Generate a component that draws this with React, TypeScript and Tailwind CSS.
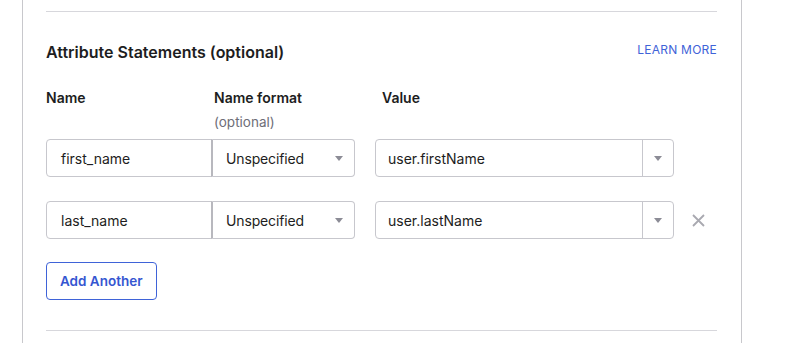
import React from 'react';

const Caret = () => (
  <svg width="8" height="5" viewBox="0 0 8 5" className="shrink-0">
    <path d="M0 0h8L4 5z" fill="#8c8c96" />
  </svg>
);

type Row = { name: string; value: string; removable?: boolean };

const rows: Row[] = [
  { name: 'first_name', value: 'user.firstName' },
  { name: 'last_name', value: 'user.lastName', removable: true },
];

const AttributeRow = ({ row }: { row: Row }) => (
  <div className="flex items-center h-[38px]">
    <div className="flex w-[309px] h-full">
      <div className="w-[166px] h-full flex items-center pl-[14px] border border-[#c7c7cd] rounded-l-[4px] text-[14px] text-[#1d1d21]">
        {row.name}
      </div>
      <div className="flex-1 h-full flex items-center justify-between pl-[13px] pr-[11px] border border-l-[#b8b8be] border-l-2 border-[#c7c7cd] -ml-px rounded-r-[4px] text-[14px] tracking-[-0.01em] text-[#1d1d21]">
        Unspecified
        <Caret />
      </div>
    </div>
    <div className="ml-[20px] w-[299px] h-full flex border border-[#c7c7cd] rounded-[4px]">
      <div className="flex-1 flex items-center pl-[12px] text-[14px] text-[#1d1d21]">{row.value}</div>
      <div className="w-[31px] flex items-center justify-center border-l border-[#c7c7cd]">
        <Caret />
      </div>
    </div>
    {row.removable && (
      <button className="ml-[17px] w-[14px] h-[14px] flex items-center justify-center">
        <svg width="13" height="13" viewBox="0 0 13 13">
          <path d="M1 1l11 11M12 1L1 12" stroke="#a9a9b0" strokeWidth="1.8" />
        </svg>
      </button>
    )}
  </div>
);

export default function App() {
  return (
    <div className="w-[785px] h-[343px] bg-white overflow-hidden font-['Inter',sans-serif]">
      <div className="ml-[22px] w-[720px] h-full border-x border-[#c8c8cc] pl-[23px] pr-[24px]">
        <div className="pt-[11px]">
          <div className="border-t border-[#d7d7dc]" />
        </div>

        <div className="mt-[28px] flex items-center justify-between h-[24px]">
          <h2 className="text-[16px] font-semibold text-[#1d1d21]">Attribute Statements (optional)</h2>
          <a className="text-[12px] tracking-[0.02em] text-[#3f63d8] -mt-[4px]">LEARN MORE</a>
        </div>

        <div className="mt-[24px] flex text-[14px] font-semibold text-[#1d1d21] leading-[20px]">
          <div className="w-[168px]">Name</div>
          <div className="w-[168px]">
            Name format
            <div className="mt-[4px] text-[13.5px] font-normal text-[#6e6e78]">(optional)</div>
          </div>
          <div>Value</div>
        </div>

        <div className="mt-[7px] flex flex-col gap-[24px]">
          {rows.map((r) => (
            <AttributeRow key={r.name} row={r} />
          ))}
        </div>

        <button className="mt-[23px] h-[38px] px-[13px] border border-[#3f63d8] rounded-[4px] text-[13.5px] font-semibold text-[#3556d1]">
          Add Another
        </button>

        <div className="mt-[30px] border-t border-[#d7d7dc]" />
      </div>
    </div>
  );
}
